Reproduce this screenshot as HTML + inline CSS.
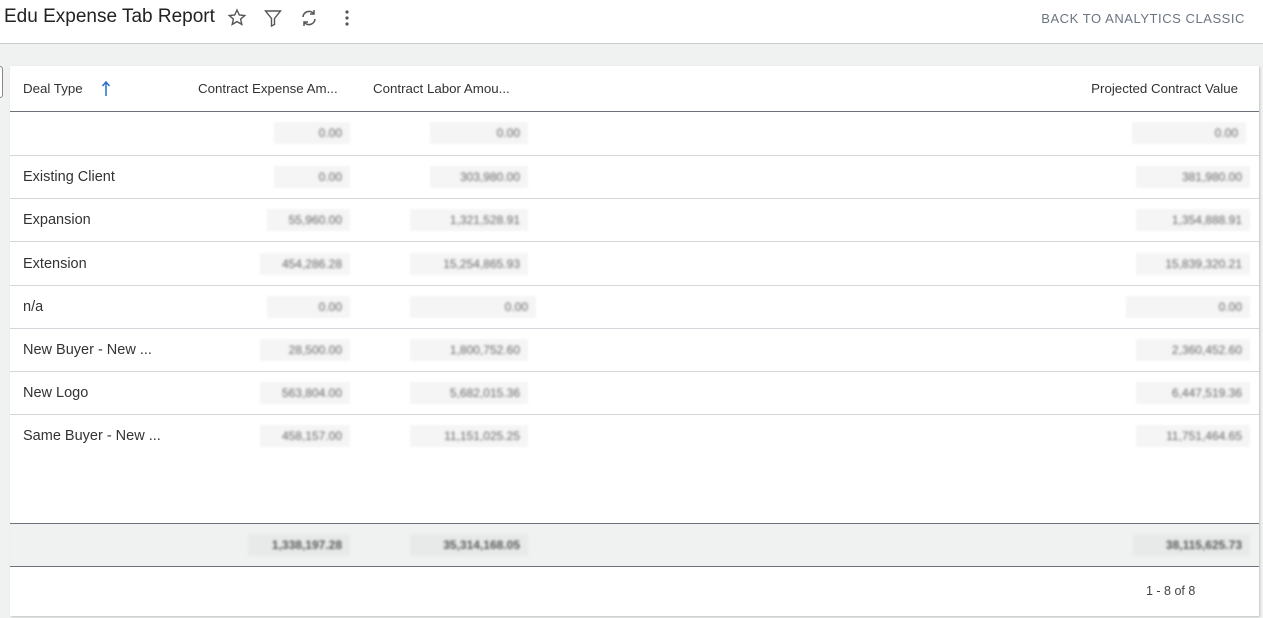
<!DOCTYPE html>
<html><head><meta charset="utf-8"><style>
*{box-sizing:border-box;margin:0;padding:0}
body{width:1263px;height:618px;background:#f0f1f1;font-family:"Liberation Sans",sans-serif;color:#333;position:relative;overflow:hidden}
.top{position:absolute;left:0;top:0;width:1263px;height:44px;background:#fff;border-bottom:1px solid #c8cbd0}
.title{position:absolute;left:4px;top:6px;font-size:19px;color:#222}
.back{position:absolute;right:18px;top:11px;font-size:13px;letter-spacing:0.55px;color:#6b7480}
.card{position:absolute;left:10px;top:66px;width:1249px;height:550px;background:#fff;box-shadow:1px 1px 2px rgba(0,0,0,.2)}
.a{position:absolute;font-size:14.5px;white-space:nowrap}
.h{font-size:13.3px;color:#333}
.line{position:absolute;left:0;width:1249px;height:1px;background:#d3d7dc}
.v{position:absolute;height:22px;background:#f5f5f5;font-size:12px;color:#666;filter:blur(1.4px);text-align:right;padding:4px 8px 0 0}
.tab{position:absolute;left:-3px;top:66px;width:6px;height:32px;border:1px solid #888;border-radius:3px;background:#fff}
</style></head><body>
<div class="top">
<div class="title">Edu Expense Tab Report</div>
<svg style="position:absolute;left:227px;top:8px" width="20" height="20" viewBox="0 0 20 20" fill="none" stroke="#555" stroke-width="1.4"><path d="M10 2l2.3 5 5.4.5-4.1 3.6 1.2 5.3L10 13.6 5.2 16.4l1.2-5.3L2.3 7.5l5.4-.5z"/></svg>
<svg style="position:absolute;left:263px;top:8px" width="20" height="20" viewBox="0 0 20 20" fill="none" stroke="#555" stroke-width="1.4"><path d="M2.5 3h15l-6 7.5v6l-3 1.5v-7.5z"/></svg>
<svg style="position:absolute;left:299px;top:8px" width="20" height="20" viewBox="0 0 20 20" fill="none" stroke="#555" stroke-width="1.5"><path d="M4 9a6 6 0 0 1 10.5-3.5M16 11a6 6 0 0 1-10.5 3.5"/><path d="M15 2v4h-4M5 18v-4h4"/></svg>
<svg style="position:absolute;left:343px;top:9px" width="8" height="18"><circle cx="4" cy="3" r="1.6" fill="#555"/><circle cx="4" cy="9" r="1.6" fill="#555"/><circle cx="4" cy="15" r="1.6" fill="#555"/></svg>
<div class="back">BACK TO ANALYTICS CLASSIC</div>
</div>
<div class="tab"></div>
<div class="card">
<div class="a h" style="left:13px;top:15px">Deal Type</div>
<svg style="position:absolute;left:91px;top:15px" width="10" height="16"><path d="M5 1v14M1.5 5L5 1l3.5 4" stroke="#2a6fc9" stroke-width="1.5" fill="none"/></svg>
<div class="a h" style="left:188px;top:15px">Contract Expense Am...</div>
<div class="a h" style="left:363px;top:15px">Contract Labor Amou...</div>
<div class="a h" style="right:21px;top:15px">Projected Contract Value</div>
<div class="line" style="top:45px;background:#6e737b"></div>

<div class="v" style="left:264px;top:56px;width:76px">0.00</div><div class="v" style="left:420px;top:56px;width:98px">0.00</div><div class="v" style="left:1122px;top:56px;width:114px">0.00</div>
<div class="line" style="top:89px"></div>
<div class="a" style="left:13px;top:103px">Existing Client</div>
<div class="v" style="left:264px;top:100px;width:76px">0.00</div><div class="v" style="left:420px;top:100px;width:98px">303,980.00</div><div class="v" style="left:1126px;top:100px;width:114px">381,980.00</div>
<div class="line" style="top:132px"></div>
<div class="a" style="left:13px;top:146px">Expansion</div>
<div class="v" style="left:257px;top:143px;width:83px">55,960.00</div><div class="v" style="left:400px;top:143px;width:118px">1,321,528.91</div><div class="v" style="left:1126px;top:143px;width:114px">1,354,888.91</div>
<div class="line" style="top:175px"></div>
<div class="a" style="left:13px;top:190px">Extension</div>
<div class="v" style="left:250px;top:187px;width:90px">454,286.28</div><div class="v" style="left:400px;top:187px;width:118px">15,254,865.93</div><div class="v" style="left:1126px;top:187px;width:114px">15,839,320.21</div>
<div class="line" style="top:219px"></div>
<div class="a" style="left:13px;top:233px">n/a</div>
<div class="v" style="left:257px;top:230px;width:83px">0.00</div><div class="v" style="left:400px;top:230px;width:126px">0.00</div><div class="v" style="left:1116px;top:230px;width:124px">0.00</div>
<div class="line" style="top:262px"></div>
<div class="a" style="left:13px;top:276px">New Buyer - New ...</div>
<div class="v" style="left:250px;top:273px;width:90px">28,500.00</div><div class="v" style="left:400px;top:273px;width:118px">1,800,752.60</div><div class="v" style="left:1126px;top:273px;width:114px">2,360,452.60</div>
<div class="line" style="top:305px"></div>
<div class="a" style="left:13px;top:319px">New Logo</div>
<div class="v" style="left:250px;top:316px;width:90px">563,804.00</div><div class="v" style="left:400px;top:316px;width:118px">5,682,015.36</div><div class="v" style="left:1126px;top:316px;width:114px">6,447,519.36</div>
<div class="line" style="top:348px"></div>
<div class="a" style="left:13px;top:362px">Same Buyer - New ...</div>
<div class="v" style="left:250px;top:359px;width:90px">458,157.00</div><div class="v" style="left:400px;top:359px;width:118px">11,151,025.25</div><div class="v" style="left:1126px;top:359px;width:114px">11,751,464.65</div>

<div class="line" style="top:457px;background:#6e737b"></div>
<div style="position:absolute;left:0;top:458px;width:1249px;height:42px;background:#f0f1f1"></div>
<div class="v" style="left:238px;top:468px;width:102px;background:#e8e9e9;font-weight:bold;color:#555">1,338,197.28</div>
<div class="v" style="left:400px;top:468px;width:118px;background:#e8e9e9;font-weight:bold;color:#555">35,314,168.05</div>
<div class="v" style="left:1123px;top:468px;width:117px;background:#e8e9e9;font-weight:bold;color:#555">38,115,625.73</div>
<div class="line" style="top:500px;background:#6e737b"></div>
<div class="a" style="left:1136px;top:518px;font-size:12.5px;color:#444">1 - 8 of 8</div>
</div>
</body></html>
